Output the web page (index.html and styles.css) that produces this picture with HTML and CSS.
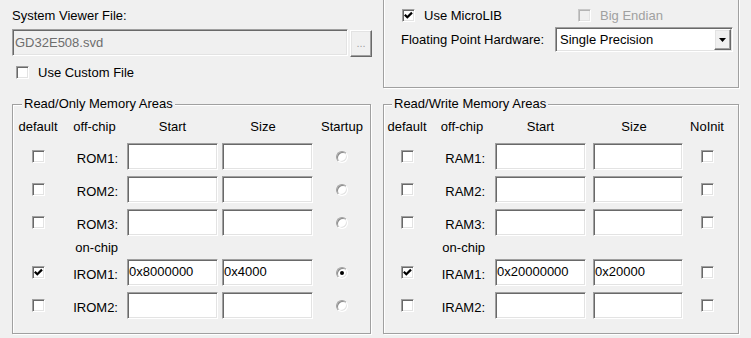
FILE: index.html
```html
<!DOCTYPE html>
<html lang="en">
<head>
  <meta charset="UTF-8">
  <title>Options for Target - Target</title>
  <link rel="stylesheet" href="styles.css">
</head>
<body>
  <div class="top">
    <div class="svd">
      <div class="svd-label">System Viewer File:</div>
      <div class="svd-row">
        <div class="edit svd-edit">GD32E508.svd</div>
        <div class="btn-dots">...</div>
      </div>
      <div class="check-row custom">
        <span class="cb"></span>
        <span>Use Custom File</span>
      </div>
    </div>

    <div class="group lib">
      <div class="lib-grid">
        <div class="check-row">
          <span class="cb"><svg class="tick" width="9" height="9" viewBox="0 0 9 9"><path d="M0.8 3.8 L3.3 6.3 L8 1.6" fill="none" stroke="#000" stroke-width="2.2"/></svg></span>
          <span>Use MicroLIB</span>
        </div>
        <div class="check-row endian">
          <span class="cb disabled"></span>
          <span>Big Endian</span>
        </div>
        <div class="fp-label">Floating Point Hardware:</div>
        <div class="edit combo">
          <span>Single Precision</span>
          <span class="drop"><svg width="7" height="4" viewBox="0 0 7 4"><polygon points="0,0 7,0 3.5,4" fill="#000"/></svg></span>
        </div>
      </div>
    </div>
  </div>

  <div class="bottom">
    <div class="group mem rom">
      <span class="legend">Read/Only Memory Areas</span>
      <div class="mem-grid">
        <div class="hd c1">default</div>
        <div class="hd">off-chip</div>
        <div class="hd start">Start</div>
        <div class="hd size">Size</div>
        <div class="hd">Startup</div>

        <span class="cb c1"></span>
        <div class="lbl">ROM1:</div>
        <div class="edit field"></div>
        <div class="edit field"></div>
        <span class="radio"></span>

        <span class="cb c1"></span>
        <div class="lbl">ROM2:</div>
        <div class="edit field"></div>
        <div class="edit field"></div>
        <span class="radio"></span>

        <span class="cb c1"></span>
        <div class="lbl">ROM3:</div>
        <div class="edit field"></div>
        <div class="edit field"></div>
        <span class="radio"></span>

        <div class="lbl chip">on-chip</div>

        <span class="cb c1"><svg class="tick" width="9" height="9" viewBox="0 0 9 9"><path d="M0.8 3.8 L3.3 6.3 L8 1.6" fill="none" stroke="#000" stroke-width="2.2"/></svg></span>
        <div class="lbl">IROM1:</div>
        <div class="edit field">0x8000000</div>
        <div class="edit field">0x4000</div>
        <span class="radio on"></span>

        <span class="cb c1"></span>
        <div class="lbl">IROM2:</div>
        <div class="edit field"></div>
        <div class="edit field"></div>
        <span class="radio"></span>
      </div>
    </div>

    <div class="group mem ram">
      <span class="legend">Read/Write Memory Areas</span>
      <div class="mem-grid">
        <div class="hd c1">default</div>
        <div class="hd">off-chip</div>
        <div class="hd start">Start</div>
        <div class="hd size">Size</div>
        <div class="hd">NoInit</div>

        <span class="cb c1"></span>
        <div class="lbl">RAM1:</div>
        <div class="edit field"></div>
        <div class="edit field"></div>
        <span class="cb"></span>

        <span class="cb c1"></span>
        <div class="lbl">RAM2:</div>
        <div class="edit field"></div>
        <div class="edit field"></div>
        <span class="cb"></span>

        <span class="cb c1"></span>
        <div class="lbl">RAM3:</div>
        <div class="edit field"></div>
        <div class="edit field"></div>
        <span class="cb"></span>

        <div class="lbl chip">on-chip</div>

        <span class="cb c1"><svg class="tick" width="9" height="9" viewBox="0 0 9 9"><path d="M0.8 3.8 L3.3 6.3 L8 1.6" fill="none" stroke="#000" stroke-width="2.2"/></svg></span>
        <div class="lbl">IRAM1:</div>
        <div class="edit field">0x20000000</div>
        <div class="edit field">0x20000</div>
        <span class="cb"></span>

        <span class="cb c1"></span>
        <div class="lbl">IRAM2:</div>
        <div class="edit field"></div>
        <div class="edit field"></div>
        <span class="cb"></span>
      </div>
    </div>
  </div>
</body>
</html>
```

FILE: styles.css
```css
body {
  margin: 0;
  padding: 0 12px;
  width: 751px;
  height: 338px;
  box-sizing: border-box;
  overflow: hidden;
  background: #f0f0f0;
  font-family: "Liberation Sans", Arial, sans-serif;
  font-size: 13px;
  line-height: 15px;
  color: #000;
}

/* sunken edit look */
.edit {
  box-sizing: border-box;
  height: 27px;
  padding: 4px 1px 0;
  border: 1px solid;
  border-color: #a0a0a0 #fff #fff #a0a0a0;
  box-shadow: inset 1px 1px 0 #696969, inset -1px -1px 0 #e3e3e3;
  background: #fff;
  white-space: nowrap;
  overflow: hidden;
}

.cb {
  box-sizing: border-box;
  width: 13px;
  height: 13px;
  display: flex;
  align-items: center;
  justify-content: center;
  border: 1px solid;
  border-color: #a0a0a0 #fff #fff #a0a0a0;
  box-shadow: inset 1px 1px 0 #696969, inset -1px -1px 0 #e3e3e3;
  background: #fff;
}
.cb.disabled {
  background: #f0f0f0;
  border-color: #c8c8c8 #fff #fff #c8c8c8;
  box-shadow: inset 1px 1px 0 #b4b4b4, inset -1px -1px 0 #e3e3e3;
}
.tick {
  display: block;
}

.radio {
  box-sizing: border-box;
  width: 12px;
  height: 12px;
  border-radius: 50%;
  border: 1px solid;
  border-color: #a0a0a0 #fff #fff #a0a0a0;
  box-shadow: inset 1px 1px 0 #8a8a8a, inset -1px -1px 0 #e3e3e3;
  background: #fff;
  display: flex;
  align-items: center;
  justify-content: center;
}
.radio.on::after {
  content: "";
  width: 4px;
  height: 4px;
  border-radius: 50%;
  background: #000;
}

.check-row {
  display: flex;
  align-items: center;
  gap: 9px;
  height: 13px;
}

/* top part */
.top {
  display: grid;
  grid-template-columns: 360px 356px;
  column-gap: 11px;
  height: 88px;
}
.svd-label {
  margin-top: 8px;
}
.svd-row {
  display: flex;
  margin-top: 6px;
}
.svd-edit {
  width: 336px;
  padding: 5px 2px 0;
  background: #f0f0f0;
  color: #6d6d6d;
}
.btn-dots {
  box-sizing: border-box;
  width: 22px;
  height: 27px;
  margin: 1px 0 0 2px;
  padding-top: 5px;
  border: 1px solid;
  border-color: #fff #696969 #696969 #fff;
  box-shadow: inset -1px -1px 0 #a0a0a0, inset 1px 1px 0 #e3e3e3;
  text-align: center;
  font-size: 11px;
  color: #a0a0a0;
}
.custom {
  margin: 9px 0 0 4px;
}

.group {
  position: relative;
  box-sizing: border-box;
  border: 1px solid #a0a0a0;
  box-shadow: 1px 1px 0 #fff, inset 1px 1px 0 #fff;
}
.lib {
  margin-top: -12px;
  height: 100px;
  padding: 20px 0 0 18px;
}
.lib-grid {
  display: grid;
  grid-template-columns: 153px 178px;
  grid-template-rows: 13px 25px;
  row-gap: 5px;
}
.endian {
  padding-left: 23px;
  color: #a0a0a0;
}
.fp-label {
  align-self: center;
  margin-left: -1px;
}
.combo {
  height: 25px;
  display: flex;
  align-items: center;
  padding: 0 0 0 4px;
}
.drop {
  box-sizing: border-box;
  margin-left: auto;
  margin-right: 1px;
  width: 17px;
  height: 21px;
  display: flex;
  align-items: center;
  justify-content: center;
  background: #f0f0f0;
  border: 1px solid;
  border-color: #fff #696969 #696969 #fff;
  box-shadow: inset -1px -1px 0 #a0a0a0, inset 1px 1px 0 #e3e3e3;
}

/* memory areas */
.bottom {
  display: grid;
  grid-template-columns: 359px 356px;
  column-gap: 12px;
  margin-top: 16px;
}
.mem {
  height: 230px;
  padding: 14px 1px 0 1px;
}
.legend {
  position: absolute;
  top: -9px;
  left: 9px;
  padding: 0 2px;
  background: #f0f0f0;
}
.ram .legend {
  left: 8px;
}
.mem-grid {
  display: grid;
  grid-template-rows: 18px 27px 27px 27px 11px 27px 27px;
  row-gap: 6px;
}
.rom .mem-grid {
  grid-template-columns: 48px 65px 95px 96px 48px;
}
.ram .mem-grid {
  grid-template-columns: 44px 66px 98px 95px 38px;
}
.c1 {
  grid-column: 1;
}
.hd {
  align-self: start;
  text-align: center;
}
.hd.start {
  width: 91px;
}
.hd.size {
  width: 91px;
  box-sizing: border-box;
  padding-right: 9px;
}
.ram .hd.size {
  width: 90px;
  padding-right: 8px;
}
.mem-grid .cb,
.mem-grid .radio {
  justify-self: center;
  align-self: center;
}
.lbl {
  grid-column: 2;
  justify-self: end;
  align-self: start;
  padding: 8px 9px 0 0;
}
.ram .lbl {
  padding-right: 10px;
}
.lbl.chip {
  padding-top: 0;
  line-height: 11px;
}
.field {
  width: 91px;
}
.ram .field + .field {
  width: 90px;
}
```
